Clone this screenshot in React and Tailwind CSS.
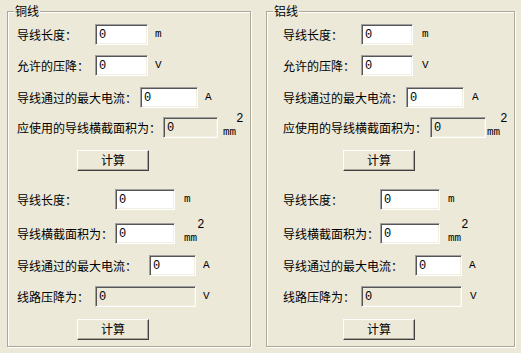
const cn = { fontFamily: '"Noto Sans CJK SC", "Noto Sans", sans-serif' };
const mono = { fontFamily: '"Liberation Mono", "DejaVu Sans Mono", monospace' };

const Field = ({ width, readOnly }) => (
  <div
    className={`${width} h-[21px] flex items-center pl-[3px] border border-t-[#a0a0a0] border-l-[#a0a0a0] border-b-white border-r-white shadow-[inset_1px_1px_0_#555,inset_-1px_-1px_0_#f1efe2] ${
      readOnly ? "bg-[#ECE9D8]" : "bg-white"
    }`}
  >
    <span className="text-[12px] leading-none text-black" style={mono}>
      0
    </span>
  </div>
);

const Unit = ({ children, gap }) => (
  <span className={`${gap} text-[11px] leading-none text-black`} style={mono}>
    {children}
  </span>
);

const Area = ({ gap }) => (
  <span className={`${gap} flex items-start h-[21px] text-black`} style={mono}>
    <span className="mt-[10px] text-[11px] leading-none text-black">mm</span>
    <span className="-mt-[4px] text-[12px] leading-none text-black">2</span>
  </span>
);

const Row = ({ mt, lw, label, children }) => (
  <div className={`${mt} flex items-center h-[21px]`}>
    <span className={`${lw} text-[12px] leading-none text-black whitespace-nowrap`} style={cn}>
      {label}
    </span>
    {children}
  </div>
);

const Button = ({ mt }) => (
  <div className={`${mt} ml-[60px]`}>
    <button
      className="w-[72px] h-[21px] bg-[#ECE9D8] text-[12px] leading-none text-black border border-t-white border-l-white border-b-[#404040] border-r-[#404040] shadow-[inset_-1px_-1px_0_#aca899]"
      style={cn}
    >
      计算
    </button>
  </div>
);

const Group = ({ title, className, children }) => (
  <div
    className={`${className} mt-[11px] h-[336px] border border-[#aca899] shadow-[inset_1px_1px_0_#fff,1px_1px_0_#fff]`}
  >
    <div
      className="w-fit ml-[6px] -mt-[7px] px-[1px] bg-[#ECE9D8] text-[12px] leading-[12px] text-black"
      style={cn}
    >
      {title}
    </div>
    {children}
  </div>
);

export default function App() {
  return (
    <div className="w-[521px] h-[353px] bg-[#ECE9D8] flex items-start overflow-hidden">
      <Group title="铜线" className="ml-[7px] w-[244px]">
        <div className="pl-[9px] flex flex-col">
          <Row mt="mt-[7px]" lw="w-[78px]" label="导线长度：">
            <Field width="w-[53px]" />
            <Unit gap="ml-[7px]">m</Unit>
          </Row>
          <Row mt="mt-[10px]" lw="w-[78px]" label="允许的压降：">
            <Field width="w-[53px]" />
            <Unit gap="ml-[7px]">V</Unit>
          </Row>
          <Row mt="mt-[11px]" lw="w-[123px]" label="导线通过的最大电流：">
            <Field width="w-[58px]" />
            <Unit gap="ml-[7px]">A</Unit>
          </Row>
          <Row mt="mt-[9px]" lw="w-[146px]" label="应使用的导线横截面积为：">
            <Field width="w-[55px]" readOnly />
            <Area gap="ml-[5px]" />
          </Row>
          <Button mt="mt-[9px]" />
          <Row mt="mt-[18px]" lw="w-[98px]" label="导线长度：">
            <Field width="w-[60px]" />
            <Unit gap="ml-[9px]">m</Unit>
          </Row>
          <Row mt="mt-[13px]" lw="w-[98px]" label="导线横截面积为：">
            <Field width="w-[60px]" />
            <Area gap="ml-[9px]" />
          </Row>
          <Row mt="mt-[11px]" lw="w-[132px]" label="导线通过的最大电流：">
            <Field width="w-[47px]" />
            <Unit gap="ml-[7px]">A</Unit>
          </Row>
          <Row mt="mt-[10px]" lw="w-[78px]" label="线路压降为：">
            <Field width="w-[101px]" readOnly />
            <Unit gap="ml-[7px]">V</Unit>
          </Row>
          <Button mt="mt-[9px]" />
        </div>
      </Group>

      <Group title="铝线" className="ml-[15px] w-[249px]">
        <div className="pl-[16px] flex flex-col">
          <Row mt="mt-[7px]" lw="w-[78px]" label="导线长度：">
            <Field width="w-[52px]" />
            <Unit gap="ml-[9px]">m</Unit>
          </Row>
          <Row mt="mt-[10px]" lw="w-[78px]" label="允许的压降：">
            <Field width="w-[52px]" />
            <Unit gap="ml-[9px]">V</Unit>
          </Row>
          <Row mt="mt-[11px]" lw="w-[123px]" label="导线通过的最大电流：">
            <Field width="w-[58px]" />
            <Unit gap="ml-[8px]">A</Unit>
          </Row>
          <Row mt="mt-[9px]" lw="w-[147px]" label="应使用的导线横截面积为：">
            <Field width="w-[56px]" readOnly />
            <Area gap="ml-[1px]" />
          </Row>
          <Button mt="mt-[9px]" />
          <Row mt="mt-[18px]" lw="w-[97px]" label="导线长度：">
            <Field width="w-[60px]" />
            <Unit gap="ml-[8px]">m</Unit>
          </Row>
          <Row mt="mt-[13px]" lw="w-[97px]" label="导线横截面积为：">
            <Field width="w-[60px]" />
            <Area gap="ml-[8px]" />
          </Row>
          <Row mt="mt-[11px]" lw="w-[132px]" label="导线通过的最大电流：">
            <Field width="w-[47px]" />
            <Unit gap="ml-[7px]">A</Unit>
          </Row>
          <Row mt="mt-[10px]" lw="w-[78px]" label="线路压降为：">
            <Field width="w-[101px]" readOnly />
            <Unit gap="ml-[8px]">V</Unit>
          </Row>
          <Button mt="mt-[9px]" />
        </div>
      </Group>
    </div>
  );
}
